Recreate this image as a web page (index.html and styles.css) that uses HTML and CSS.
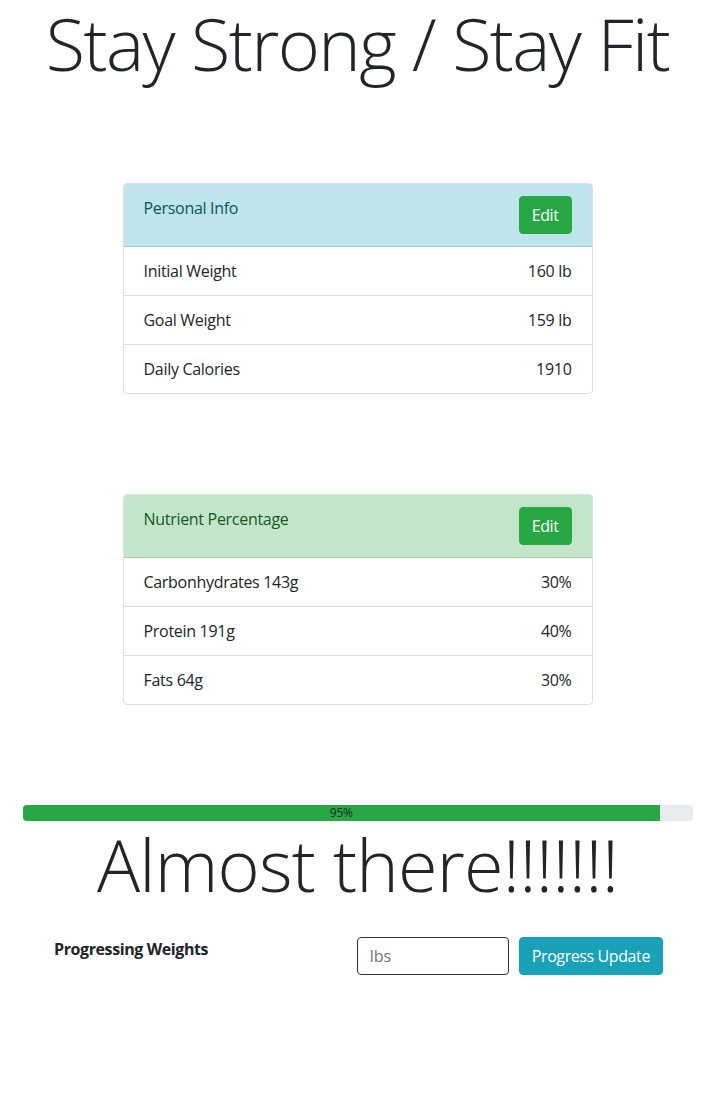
FILE: index.html
```html
<!DOCTYPE html>
<html lang="en">
<head>
<meta charset="utf-8">
<title>Stay Strong / Stay Fit</title>
<link rel="stylesheet" href="styles.css">
</head>
<body>
<h1 class="display title">Stay Strong / Stay Fit</h1>

<section class="card">
  <div class="card-header info">
    <span class="card-title">Personal Info</span>
    <button class="btn btn-success">Edit</button>
  </div>
  <ul class="list">
    <li class="list-item"><span>Initial Weight</span><span>160 lb</span></li>
    <li class="list-item"><span>Goal Weight</span><span>159 lb</span></li>
    <li class="list-item"><span>Daily Calories</span><span>1910</span></li>
  </ul>
</section>

<section class="card card-second">
  <div class="card-header success">
    <span class="card-title">Nutrient Percentage</span>
    <button class="btn btn-success">Edit</button>
  </div>
  <ul class="list">
    <li class="list-item"><span>Carbonhydrates 143g</span><span>30%</span></li>
    <li class="list-item"><span>Protein 191g</span><span>40%</span></li>
    <li class="list-item"><span>Fats 64g</span><span>30%</span></li>
  </ul>
</section>

<div class="progress">
  <div class="progress-bar" style="width: 95%">95%</div>
</div>

<h2 class="display subtitle">Almost there!!!!!!!</h2>

<form class="update-form">
  <label class="form-label" for="lbs">Progressing Weights</label>
  <div class="form-controls">
    <input id="lbs" class="form-input" type="text" placeholder="lbs">
    <button type="button" class="btn btn-info">Progress Update</button>
  </div>
</form>
</body>
</html>
```

FILE: styles.css
```css
* { box-sizing: border-box; }

body {
  margin: 0;
  font-family: "Open Sans", "Noto Sans", sans-serif;
  font-size: 16px;
  line-height: 1.5;
  color: #212529;
  background: #fff;
  letter-spacing: -0.3px;
}

.display {
  margin: 0;
  font-size: 72px;
  font-weight: 300;
  line-height: 1.2;
  text-align: center;
}

.title {
  margin-bottom: 97px;
  letter-spacing: -1.6px;
}

.subtitle { letter-spacing: -0.8px; }

.card {
  width: 470px;
  margin: 0 auto;
  border: 1px solid rgba(0,0,0,.125);
  border-radius: 4px;
  overflow: hidden;
}

.card-second { margin-top: 100px; }

.card-header {
  display: flex;
  justify-content: space-between;
  align-items: flex-start;
  padding: 12px 20px;
  border-bottom: 1px solid rgba(0,0,0,.125);
}

.card-header.info { background: #bee5eb; color: #0c5460; }
.card-header.success { background: #c3e6cb; color: #155724; }

.btn {
  font-family: inherit;
  font-size: 16px;
  line-height: 1.5;
  letter-spacing: -0.4px;
  padding: 6px 12px;
  border: 1px solid transparent;
  border-radius: 4px;
  color: #fff;
  cursor: pointer;
}

.btn-success { background: #28a745; border-color: #28a745; }
.btn-info { background: #17a2b8; border-color: #17a2b8; }

.list { list-style: none; margin: 0; padding: 0; }

.list-item {
  display: flex;
  justify-content: space-between;
  padding: 12px 20px;
  border-top: 1px solid rgba(0,0,0,.125);
}

.list-item:first-child { border-top: 0; }

.progress {
  margin: 100px 22px 0 23px;
  height: 16px;
  background: #e9ecef;
  border-radius: 4px;
  overflow: hidden;
  display: flex;
}

.progress-bar {
  background: #28a745;
  font-size: 12px;
  line-height: 16px;
  letter-spacing: -0.2px;
  text-align: center;
  color: #212529;
}

.update-form {
  display: flex;
  justify-content: space-between;
  align-items: flex-start;
  margin: 29px 52px 0 54px;
}

.form-label {
  font-weight: 700;
  letter-spacing: -0.4px;
}

.form-controls { display: flex; gap: 10px; }

.form-input {
  width: 152px;
  height: 38px;
  padding: 6px 12px;
  font-family: inherit;
  font-size: 16px;
  border: 1px solid #333;
  border-radius: 4px;
  color: #495057;
}

.form-input::placeholder { color: #6c757d; }
```
